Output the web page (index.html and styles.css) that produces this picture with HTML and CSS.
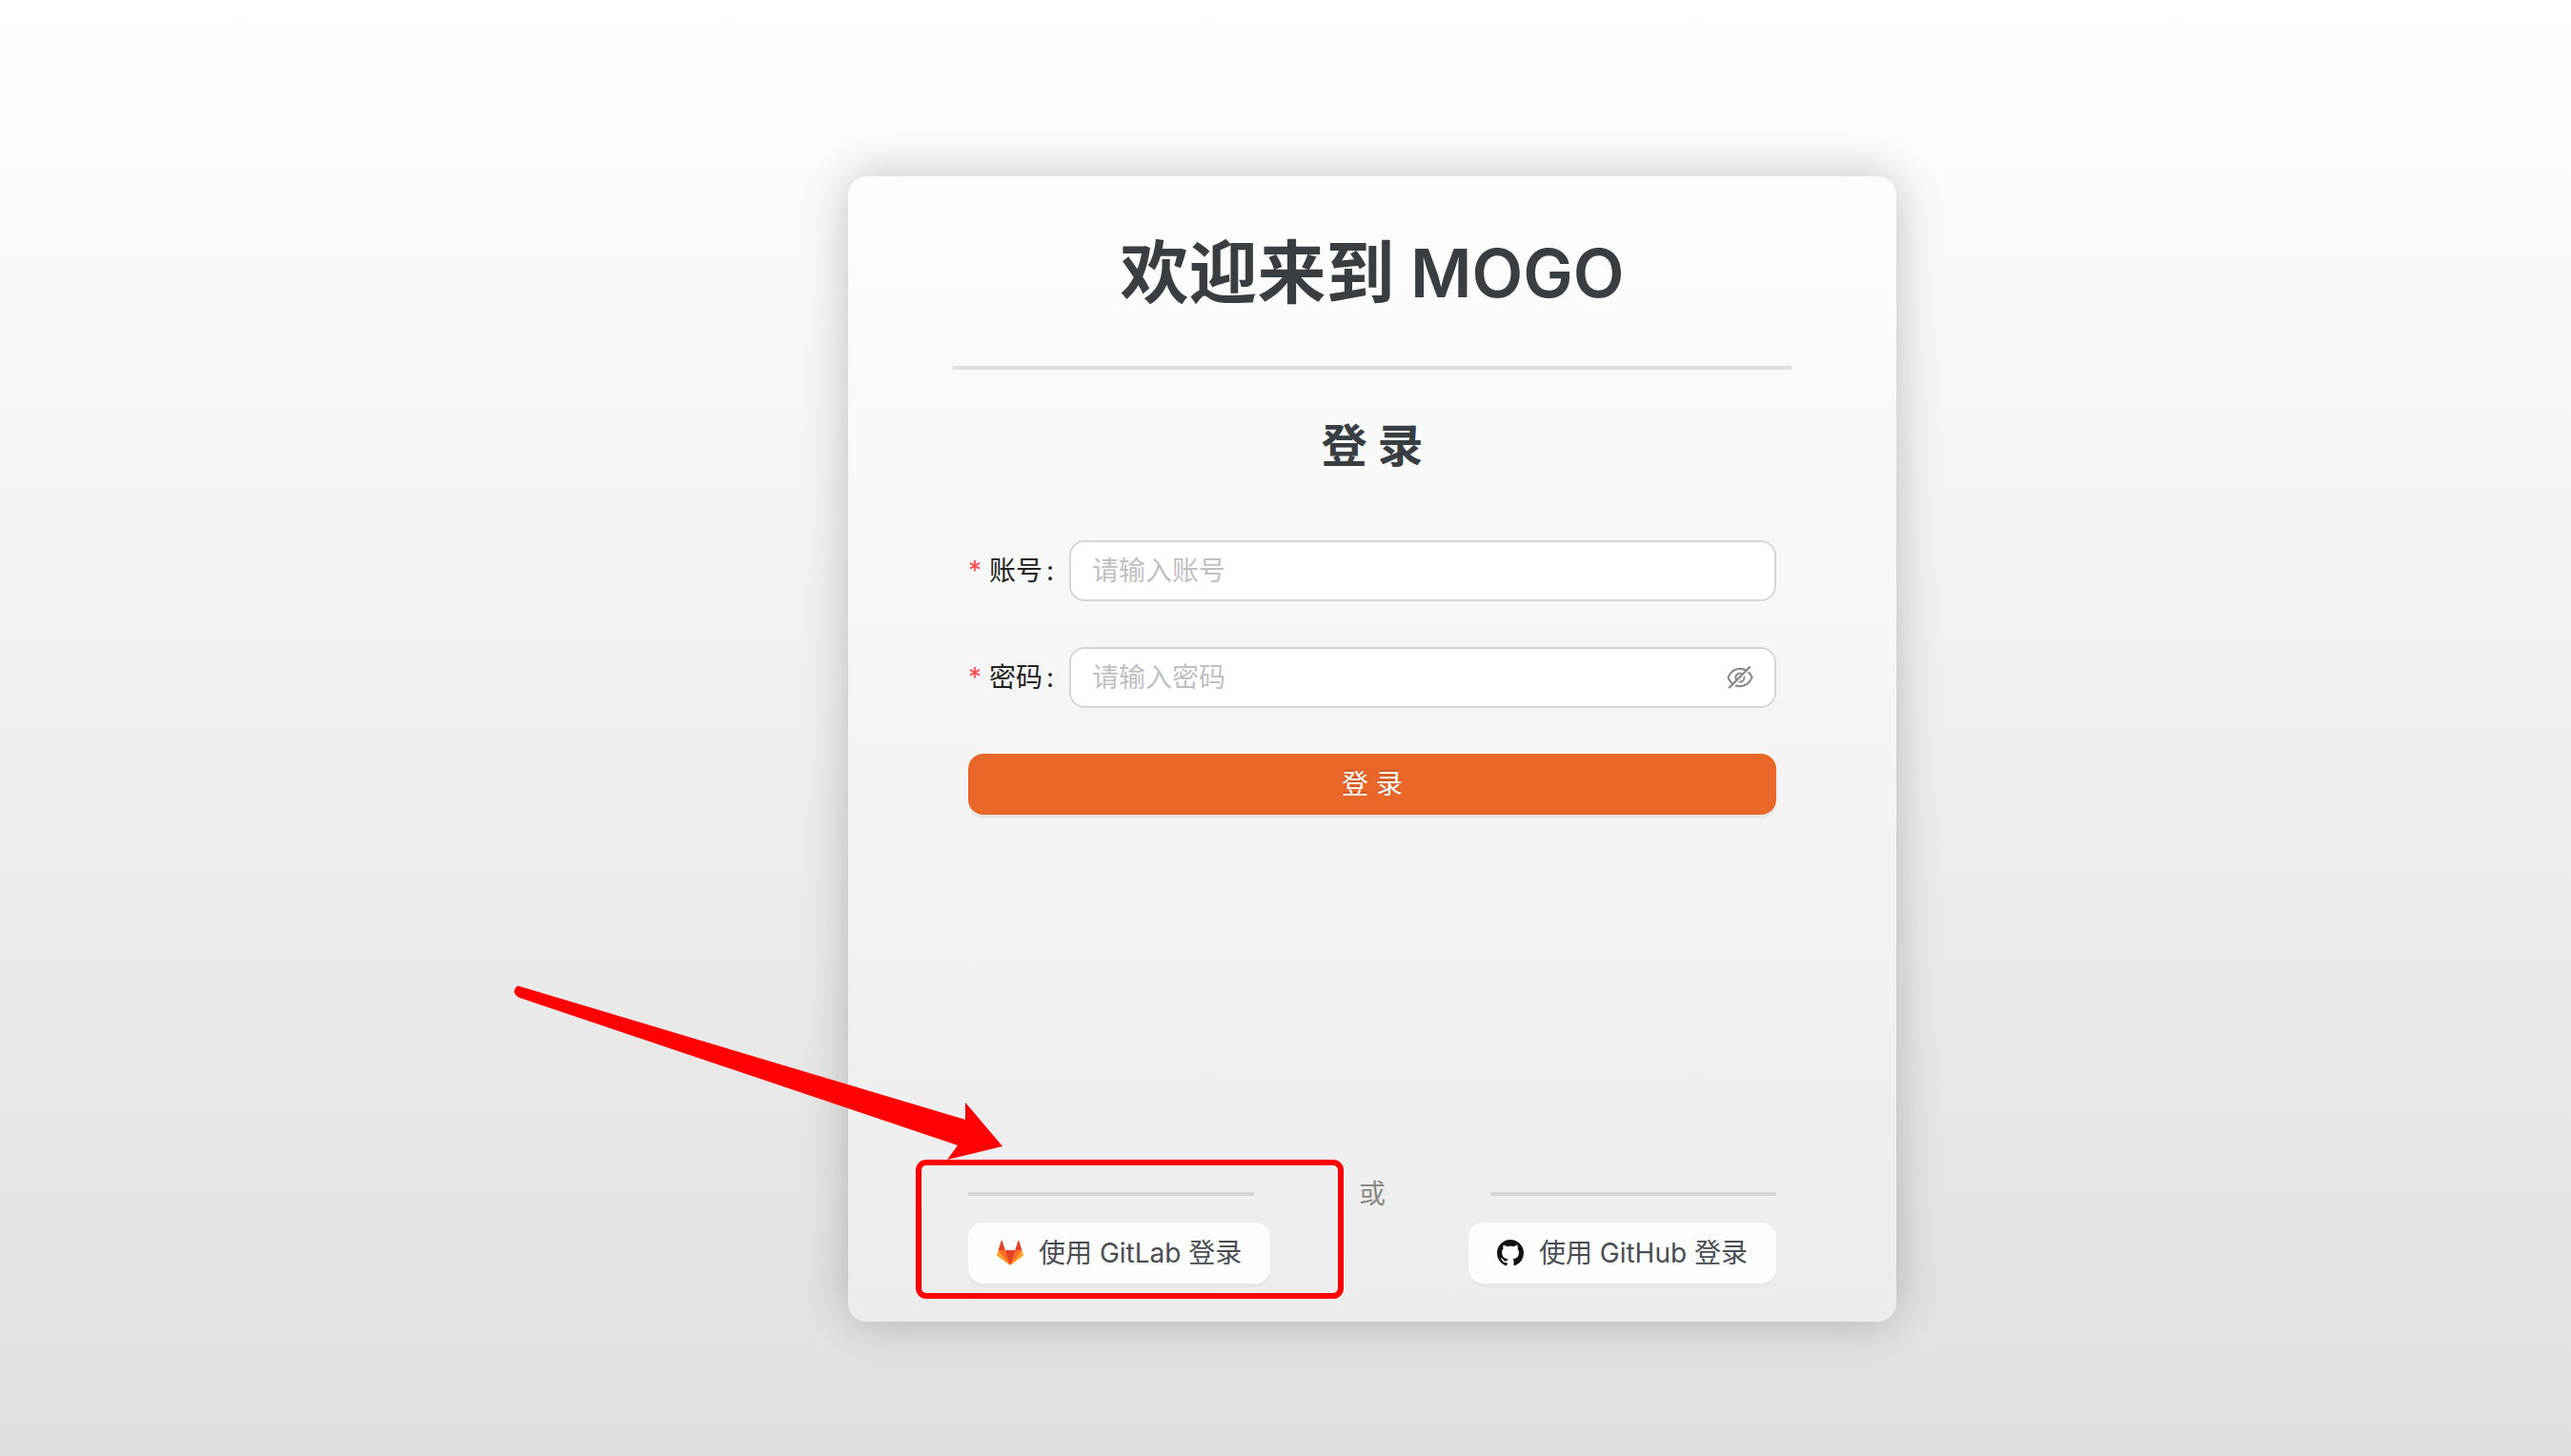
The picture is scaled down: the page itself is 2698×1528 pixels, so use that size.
FILE: index.html
```html
<!DOCTYPE html>
<html lang="zh-CN">
<head>
<meta charset="utf-8">
<meta name="viewport" content="width=device-width, initial-scale=1">
<title>登录 - MOGO</title>
<link rel="stylesheet" href="styles.css">
</head>
<body>
<main class="page">
  <section class="card">
    <h1 class="title">欢迎来到 <span class="brand">MOGO</span></h1>
    <hr class="title-rule">
    <h2 class="subtitle">登 录</h2>
    <form class="form">
      <div class="field">
        <label class="label" for="account"><span class="required">*</span>账号<span class="colon">:</span></label>
        <div class="control">
          <input class="input" id="account" type="text" placeholder="请输入账号">
        </div>
      </div>
      <div class="field">
        <label class="label" for="password"><span class="required">*</span>密码<span class="colon">:</span></label>
        <div class="control">
          <input class="input" id="password" type="password" placeholder="请输入密码">
          <button class="eye" type="button" aria-label="显示密码">
            <svg viewBox="64 64 896 896" aria-hidden="true"><path d="M942.2 486.2Q889.47 375.11 816.7 305l-50.88 50.88C807.31 395.53 843.45 447.4 874.7 512 791.5 684.2 673.4 766 512 766q-72.67 0-133.87-22.38L323 798.75Q408 838 512 838q288.3 0 430.2-300.3a60.29 60.29 0 000-51.5zm-63.57-320.64L836 122.88a8 8 0 00-11.32 0L715.31 232.2Q624.86 186 512 186q-288.3 0-430.2 300.3a60.3 60.3 0 000 51.5q56.69 119.4 136.5 191.41L112.48 835a8 8 0 000 11.31L155.17 889a8 8 0 0011.31 0l712.15-712.12a8 8 0 000-11.32zM149.3 512C232.6 339.8 350.7 258 512 258c54.54 0 104.13 9.36 149.12 28.39l-70.3 70.3a176 176 0 00-238.13 238.13l-83.42 83.42C223.1 637.49 183.3 582.28 149.3 512zm246.7 0a112.11 112.11 0 01146.2-106.69L401.31 546.2A112 112 0 01396 512z"/><path d="M508 624c-3.46 0-6.87-.16-10.25-.47l-52.82 52.82a176.09 176.09 0 00227.42-227.42l-52.82 52.82c.31 3.38.47 6.79.47 10.25a111.94 111.94 0 01-112 112z"/></svg>
          </button>
        </div>
      </div>
      <button class="submit" type="submit">登 录</button>
    </form>
    <div class="alternatives">
      <div class="or"><span class="or-line"></span><span class="or-text">或</span><span class="or-line"></span></div>
      <div class="providers">
        <button class="provider" type="button">
          <svg class="provider-icon" viewBox="0 0 36 36" aria-hidden="true"><path fill="#e24329" d="M2 14l9.38 9v-9l-4-12.28c-.205-.632-1.176-.632-1.38 0z"/><path fill="#e24329" d="M34 14l-9.38 9v-9l4-12.28c.205-.632 1.176-.632 1.38 0z"/><path fill="#e24329" d="M18 34.38L3 14h30z"/><path fill="#fc6d26" d="M18 34.38L11.38 14H2l4 11z"/><path fill="#fc6d26" d="M18 34.38L24.62 14H34l-4 11z"/><path fill="#fca326" d="M2 14L.1 20.16c-.18.565 0 1.2.5 1.56l17.42 12.66z"/><path fill="#fca326" d="M34 14l1.9 6.16c.18.565 0 1.2-.5 1.56L18 34.38z"/></svg>
          <span>使用 GitLab 登录</span>
        </button>
        <button class="provider" type="button">
          <svg class="provider-icon" viewBox="0 0 16 16" aria-hidden="true"><path fill="#111" d="M8 0C3.58 0 0 3.58 0 8c0 3.54 2.29 6.53 5.47 7.59.4.07.55-.17.55-.38 0-.19-.01-.82-.01-1.49-2.01.37-2.53-.49-2.69-.94-.09-.23-.48-.94-.82-1.13-.28-.15-.68-.52-.01-.53.63-.01 1.08.58 1.23.82.72 1.21 1.87.87 2.33.66.07-.52.28-.87.51-1.07-1.78-.2-3.64-.89-3.64-3.95 0-.87.31-1.59.82-2.15-.08-.2-.36-1.02.08-2.12 0 0 .67-.21 2.2.82.64-.18 1.32-.27 2-.27s1.36.09 2 .27c1.53-1.04 2.2-.82 2.2-.82.44 1.1.16 1.92.08 2.12.51.56.82 1.27.82 2.15 0 3.07-1.87 3.75-3.65 3.95.29.25.54.73.54 1.48 0 1.07-.01 1.93-.01 2.2 0 .21.15.46.55.38A8.01 8.01 0 0016 8c0-4.42-3.58-8-8-8z"/></svg>
          <span>使用 GitHub 登录</span>
        </button>
      </div>
      <div class="highlight"></div>
      <svg class="arrow" viewBox="0 0 512 182" aria-hidden="true"><path fill="#ff0004" d="M5 0L473 140V122L512 168L454 182L465 167L5 12Q-2 8 0 4Q2 -1 5 0z"/></svg>
    </div>
  </section>
</main>
</body>
</html>
```
FILE: styles.css
```css
* {
  box-sizing: border-box;
}

body {
  margin: 0;
  min-height: 100vh;
  background: linear-gradient(#fff, #e0e0e0);
  color: #222;
  font: 28px/44px Inter, "Noto Sans CJK SC", sans-serif;
}

button,
input {
  font: inherit;
}

.page {
  display: flex;
  justify-content: center;
  padding: 185px 0 140px 182px;
}

.card {
  width: 100%;
  max-width: 1100px;
  padding: 43px 110px 40px;
  border-radius: 20px;
  background: linear-gradient(#fdfdfd, #ececec);
  box-shadow: 0 0 50px rgba(0, 0, 0, 0.23);
}

.title,
.subtitle {
  margin: 0;
  color: #393e42;
  font-family: "Noto Sans CJK SC", sans-serif;
  font-weight: 600;
  text-align: center;
}

.title {
  font-size: 72px;
  line-height: 106px;
}

.brand {
  font-family: Inter, sans-serif;
  font-size: 70px;
  line-height: 1;
}

.title-rule {
  height: 4px;
  margin: 50px 0 40px;
  border: 0;
  background: #dfdfdf;
}

.subtitle {
  font-size: 48px;
  line-height: 72px;
}

.form {
  display: flex;
  flex-direction: column;
  gap: 48px;
  padding: 67px 16px 0;
}

.field {
  display: flex;
  align-items: center;
}

.label {
  display: flex;
  flex: 0 0 106px;
}

.required {
  width: 22px;
  color: #ff4d4f;
}

.colon {
  margin-left: 4px;
}

.control {
  display: flex;
  align-items: center;
  flex: 1;
  min-width: 0;
  height: 64px;
  padding: 0 22px;
  border: 2px solid #d6d6d6;
  border-radius: 16px;
  background: #fff;
}

.input {
  flex: 1;
  min-width: 0;
  padding: 0;
  border: 0;
  outline: 0;
  background: transparent;
}

.input::placeholder {
  color: #bfbfbf;
}

.eye {
  display: flex;
  padding: 0;
  border: 0;
  background: none;
}

.eye svg {
  width: 28px;
  height: 28px;
  fill: #8c8c8c;
}

.submit {
  height: 64px;
  border: 0;
  border-radius: 16px;
  background: #e96729;
  box-shadow: 0 4px 0 rgba(0, 0, 0, 0.05);
  color: #fff;
  text-shadow: 0 -2px 0 rgba(0, 0, 0, 0.12);
}

.alternatives {
  position: relative;
  margin-top: 376px;
  padding: 0 16px;
}

.or,
.providers {
  display: flex;
  align-items: center;
  justify-content: space-between;
}

.or-line {
  width: 300px;
  height: 4px;
  background: #d5d5d5;
}

.or-text {
  color: #888;
}

.providers {
  margin-top: 8px;
}

.provider {
  display: flex;
  align-items: center;
  gap: 16px;
  height: 64px;
  padding: 0 30px;
  border: 0;
  border-radius: 16px;
  background: #fcfcfc;
  box-shadow: 0 4px 0 rgba(0, 0, 0, 0.02);
  color: #4b4d54;
}

.provider-icon {
  width: 28px;
  height: 28px;
}

/* Callout drawn over the GitLab button */
.highlight {
  position: absolute;
  top: -14px;
  left: -39px;
  width: 449px;
  height: 146px;
  border: 6px solid #ff0004;
  border-radius: 11px;
}

.arrow {
  position: absolute;
  top: -196px;
  left: -460px;
  width: 512px;
  height: 182px;
  overflow: visible;
}
```
